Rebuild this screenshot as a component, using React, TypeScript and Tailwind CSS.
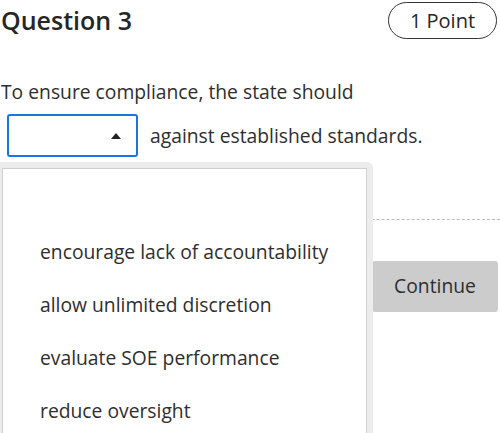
import React from "react";

export default function App() {
  const options = [
    "encourage lack of accountability",
    "allow unlimited discretion",
    "evaluate SOE performance",
    "reduce oversight",
  ];
  return (
    <div className="relative w-[500px] h-[433px] overflow-hidden bg-white font-['Open_Sans',sans-serif] text-[#2e2e2e]">
      <div className="flex flex-col">
        <div className="flex justify-between items-start pl-[1px] pr-[3px] pt-[2px]">
          <h2 className="text-[25px] font-[560] leading-[36px] text-[#262626]">Question 3</h2>
          <div className="h-[37px] w-[109px] border border-[#333] rounded-full flex items-center justify-center text-[20px] font-medium text-[#262626]">
            1 Point
          </div>
        </div>
        <p className="mt-[40px] pl-[1px] text-[19.3px] leading-[26px]">To ensure compliance, the state should</p>
        <div className="mt-[9px] flex items-center">
          <div className="ml-[7px] w-[131px] h-[43px] border-2 border-[#1b74e4] rounded-[3px] flex items-center justify-end pr-[15px]">
            <svg width="10" height="6" viewBox="0 0 10 6">
              <polygon points="0,6 10,6 5,0" fill="#222" />
            </svg>
          </div>
          <span className="ml-[12px] text-[19.3px] leading-[26px]">against established standards.</span>
        </div>
        <div className="mt-[62px] border-t border-dashed border-[#bbb]" />
        <button className="mt-[41px] self-end mr-[2px] w-[126px] h-[51px] bg-[#cccccc] rounded-[3px] text-[19.3px] text-[#2e2e2e]">
          Continue
        </button>
      </div>
      <div className="absolute left-0 top-[162px] w-[373px] h-[300px] bg-[#ececec] pl-[2px] pr-[6px] pt-[6px] rounded-tr-[6px]">
        <ul className="bg-white border border-[#cfcfcf] h-full pt-[57px] pl-[37px]">
          {options.map((o) => (
            <li key={o} className="h-[53px] flex items-center text-[19.3px]">
              {o}
            </li>
          ))}
        </ul>
      </div>
    </div>
  );
}
